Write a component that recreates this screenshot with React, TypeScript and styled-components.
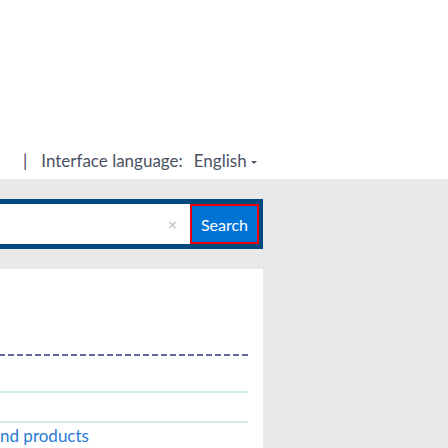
import React from "react";
import styled, { createGlobalStyle } from "styled-components";

const GlobalStyle = createGlobalStyle`
  html, body { margin: 0; padding: 0; background: #ffffff; }
  body { font-family: Lato, "Open Sans", sans-serif; overflow: hidden; }
`;

const Page = styled.div`
  width: 448px;
  height: 448px;
  display: flex;
  flex-direction: column;
  overflow: hidden;
`;

const Header = styled.header`
  height: 179px;
  flex: none;
  background: #ffffff;
  display: flex;
  align-items: flex-end;
  padding: 0 0 6px 23px;
  box-sizing: border-box;
`;

const LangBar = styled.div`
  display: flex;
  align-items: baseline;
  font-size: 17px;
  line-height: 24px;
  color: #4a5263;
`;

const Divider = styled.span`
  color: #4b4868;
  margin-right: 14px;
`;

const Label = styled.span`
  margin-right: 11px;
`;

const LangButton = styled.span`
  display: inline-flex;
  align-items: center;
  gap: 4px;
`;

const Caret = styled.span`
  width: 0;
  height: 0;
  border-left: 3px solid transparent;
  border-right: 3px solid transparent;
  border-top: 3px solid #4a5263;
  transform: translateY(1px);
`;

const Main = styled.main`
  flex: 1;
  background: #e9e9e9;
  display: grid;
  grid-template-columns: 263px 1fr;
`;

const LeftCol = styled.div`
  padding-top: 20px;
  display: flex;
  flex-direction: column;
  gap: 20px;
`;

const SearchBand = styled.form`
  margin: 0;
  height: 50px;
  box-sizing: border-box;
  background: #00497f;
  padding: 5px 4px 5px 0;
  display: flex;
`;

const InputBox = styled.div`
  flex: 1;
  background: #ffffff;
  display: flex;
  align-items: center;
  justify-content: flex-end;
  padding-right: 12px;
`;

const Clear = styled.span`
  color: #c9c9c9;
  font-size: 13px;
  font-weight: 700;
  line-height: 1;
  font-family: "DejaVu Sans", sans-serif;
`;

const SearchButton = styled.button`
  width: 69px;
  height: 40px;
  box-sizing: border-box;
  background: #0074d4;
  border: 2px solid #e8000f;
  color: #ffffff;
  font-family: Lato, sans-serif;
  font-size: 16px;
  padding: 0;
`;

const Panel = styled.section`
  flex: 1;
  background: #ffffff;
  padding: 85px 15px 0 0;
  display: flex;
  flex-direction: column;
`;

const Dashed = styled.div`
  height: 2px;
  background: repeating-linear-gradient(
    to right,
    #5d6b96 0 6px,
    transparent 6px 9px
  );
  background-position: -1px 0;
`;

const Rule = styled.div<{ $top: number }>`
  height: 2px;
  background: #d5ebe8;
  margin-top: ${(p) => p.$top}px;
`;

const LinkText = styled.a`
  display: block;
  margin-top: 1px;
  font-size: 17px;
  line-height: 24px;
  color: #2b7bd5;
  text-decoration: none;
  white-space: nowrap;
`;

export default function App() {
  return (
    <>
      <GlobalStyle />
      <Page>
        <Header>
          <LangBar>
            <Divider>|</Divider>
            <Label>Interface language:</Label>
            <LangButton>
              English
              <Caret />
            </LangButton>
          </LangBar>
        </Header>
        <Main>
          <LeftCol>
            <SearchBand onSubmit={(e) => e.preventDefault()}>
              <InputBox>
                <Clear>×</Clear>
              </InputBox>
              <SearchButton type="submit">Search</SearchButton>
            </SearchBand>
            <Panel>
              <Dashed />
              <Rule $top={35} />
              <Rule $top={28} />
              <LinkText href="#">nd products</LinkText>
            </Panel>
          </LeftCol>
          <div />
        </Main>
      </Page>
    </>
  );
}
